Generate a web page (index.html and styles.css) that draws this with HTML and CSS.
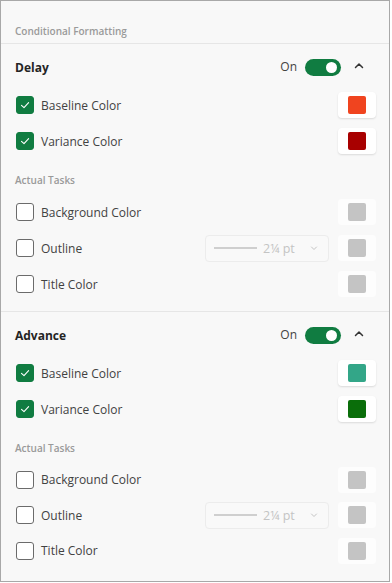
FILE: index.html
```html
<!DOCTYPE html>
<html lang="en">
	<head>
		<meta charset="UTF-8">
		<meta name="viewport" content="width=device-width,initial-scale=1">
		<title>Conditional Formatting</title>
		<link rel="stylesheet" href="styles.css">
	</head>
	<body>
		<div class="panel">
			<div class="panel-title">Conditional Formatting</div>

			<section class="group">
				<div class="group-head">
					<span class="group-name">Delay</span>
					<span class="toggle-label">On</span>
					<span class="toggle is-on"><span class="toggle__knob"></span></span>
					<svg class="chevron" width="10" height="7" viewBox="0 0 10 7"><path d="M1.5 5.5 L5 2 L8.5 5.5" fill="none" stroke="#333" stroke-width="1.5" stroke-linecap="round" stroke-linejoin="round"/></svg>
				</div>
				<div class="row">
					<span class="check is-checked"><svg width="12" height="12" viewBox="0 0 12 12"><path d="M2.5 6.3 L5 8.6 L9.6 3.6" fill="none" stroke="#fff" stroke-width="1.1" stroke-linecap="round" stroke-linejoin="round"/></svg></span>
					<span class="label">Baseline Color</span>
					<span class="swatch"><span class="swatch__color swatch--orange"></span></span>
				</div>
				<div class="row">
					<span class="check is-checked"><svg width="12" height="12" viewBox="0 0 12 12"><path d="M2.5 6.3 L5 8.6 L9.6 3.6" fill="none" stroke="#fff" stroke-width="1.1" stroke-linecap="round" stroke-linejoin="round"/></svg></span>
					<span class="label">Variance Color</span>
					<span class="swatch"><span class="swatch__color swatch--darkred"></span></span>
				</div>
				<div class="subhead">Actual Tasks</div>
				<div class="row">
					<span class="check"></span>
					<span class="label">Background Color</span>
					<span class="swatch is-disabled"><span class="swatch__color"></span></span>
				</div>
				<div class="row">
					<span class="check"></span>
					<span class="label">Outline</span>
					<span class="select">
						<span class="select__line"></span>
						<span class="select__text">2¼ pt</span>
						<svg class="select__arrow" width="8" height="6" viewBox="0 0 8 6"><path d="M1.5 2 L4 4.5 L6.5 2" fill="none" stroke="#c4c4c4" stroke-width="1" stroke-linecap="round"/></svg>
					</span>
					<span class="swatch is-disabled"><span class="swatch__color"></span></span>
				</div>
				<div class="row">
					<span class="check"></span>
					<span class="label">Title Color</span>
					<span class="swatch is-disabled"><span class="swatch__color"></span></span>
				</div>
			</section>

			<section class="group group--last">
				<div class="group-head">
					<span class="group-name">Advance</span>
					<span class="toggle-label">On</span>
					<span class="toggle is-on"><span class="toggle__knob"></span></span>
					<svg class="chevron" width="10" height="7" viewBox="0 0 10 7"><path d="M1.5 5.5 L5 2 L8.5 5.5" fill="none" stroke="#333" stroke-width="1.5" stroke-linecap="round" stroke-linejoin="round"/></svg>
				</div>
				<div class="row">
					<span class="check is-checked"><svg width="12" height="12" viewBox="0 0 12 12"><path d="M2.5 6.3 L5 8.6 L9.6 3.6" fill="none" stroke="#fff" stroke-width="1.1" stroke-linecap="round" stroke-linejoin="round"/></svg></span>
					<span class="label">Baseline Color</span>
					<span class="swatch"><span class="swatch__color swatch--teal"></span></span>
				</div>
				<div class="row">
					<span class="check is-checked"><svg width="12" height="12" viewBox="0 0 12 12"><path d="M2.5 6.3 L5 8.6 L9.6 3.6" fill="none" stroke="#fff" stroke-width="1.1" stroke-linecap="round" stroke-linejoin="round"/></svg></span>
					<span class="label">Variance Color</span>
					<span class="swatch"><span class="swatch__color swatch--green"></span></span>
				</div>
				<div class="subhead">Actual Tasks</div>
				<div class="row">
					<span class="check"></span>
					<span class="label">Background Color</span>
					<span class="swatch is-disabled"><span class="swatch__color"></span></span>
				</div>
				<div class="row">
					<span class="check"></span>
					<span class="label">Outline</span>
					<span class="select">
						<span class="select__line"></span>
						<span class="select__text">2¼ pt</span>
						<svg class="select__arrow" width="8" height="6" viewBox="0 0 8 6"><path d="M1.5 2 L4 4.5 L6.5 2" fill="none" stroke="#c4c4c4" stroke-width="1" stroke-linecap="round"/></svg>
					</span>
					<span class="swatch is-disabled"><span class="swatch__color"></span></span>
				</div>
				<div class="row">
					<span class="check"></span>
					<span class="label">Title Color</span>
					<span class="swatch is-disabled"><span class="swatch__color"></span></span>
				</div>
			</section>
		</div>
	</body>
</html>
```

FILE: styles.css
```css
body
{
	margin: 0;
	background-color: #fff;
	font-family: 'Open Sans', 'Noto Sans', sans-serif;
	color: #424242;
}

.panel
{
	width: 390px;
	height: 582px;
	box-sizing: border-box;
	border: 1px solid #a8a8a8;
	background-color: #f8f8f8;
	overflow: hidden;
}

.panel-title
{
	height: 43px;
	box-sizing: border-box;
	padding: 18px 14px 0;
	line-height: 24px;
	font-size: 10px;
	font-weight: 600;
	color: #9a9a9a;
	border-bottom: 1px solid #e6e6e6;
}

.group
{
	padding: 0 13px 9px 14px;
	border-bottom: 1px solid #e6e6e6;
}

.group--last
{
	border-bottom: none;
}

.group-head
{
	display: flex;
	align-items: center;
	height: 32px;
	margin-top: 7px;
	margin-bottom: 4px;
}

.group-name
{
	flex: 1;
	font-size: 12px;
	font-weight: 700;
	color: #242424;
}

.toggle-label
{
	font-size: 12px;
	color: #424242;
	margin-right: 8px;
	margin-top: -2px;
}

.toggle
{
	position: relative;
	width: 36px;
	height: 17px;
	border-radius: 9px;
	background-color: #107c41;
}

.toggle__knob
{
	position: absolute;
	top: 3px;
	right: 4px;
	width: 11px;
	height: 11px;
	border-radius: 50%;
	background-color: #fff;
}

.chevron
{
	margin-left: 13px;
	margin-right: 12px;
	margin-top: -3px;
}

.row
{
	display: flex;
	align-items: center;
	height: 36px;
}

.group--last .subhead ~ .row
{
	height: 35.5px;
}

.check
{
	display: flex;
	align-items: center;
	justify-content: center;
	width: 18px;
	height: 18px;
	box-sizing: border-box;
	border: 1px solid #6b6b6b;
	border-radius: 3px;
	background-color: #fff;
	margin-left: 1px;
}

.check.is-checked
{
	border-color: #107c41;
	background-color: #107c41;
}

.label
{
	flex: 1;
	margin-left: 7px;
	font-size: 12px;
	color: #424242;
}

.swatch
{
	display: flex;
	align-items: center;
	justify-content: center;
	width: 38px;
	height: 26px;
	border-radius: 4px;
	background-color: #fff;
	box-shadow: 0 1px 2px rgba(0, 0, 0, 0.12);
}

.swatch.is-disabled
{
	background-color: #fdfdfd;
	box-shadow: none;
}

.swatch__color
{
	width: 18px;
	height: 18px;
	border-radius: 2px;
	background-color: #c4c4c4;
}

.swatch--orange
{
	background-color: #f0441f;
}

.swatch--darkred
{
	background-color: #a80000;
}

.swatch--teal
{
	background-color: #33a688;
}

.swatch--green
{
	background-color: #0a6e0a;
}

.subhead
{
	height: 20px;
	line-height: 20px;
	margin-top: 11px;
	margin-bottom: 4px;
	font-size: 10px;
	font-weight: 600;
	color: #9a9a9a;
}

.select
{
	display: flex;
	align-items: center;
	width: 124px;
	height: 27px;
	box-sizing: border-box;
	margin-right: 9px;
	padding: 0 10px 0 8px;
	border: 1px solid #ececec;
	border-radius: 4px;
	background-color: #f9f9f9;
}

.select__line
{
	width: 43px;
	height: 2px;
	background-color: #cfcfcf;
}

.select__text
{
	flex: 1;
	margin-left: 6px;
	font-size: 12.5px;
	color: #c4c4c4;
}
```
